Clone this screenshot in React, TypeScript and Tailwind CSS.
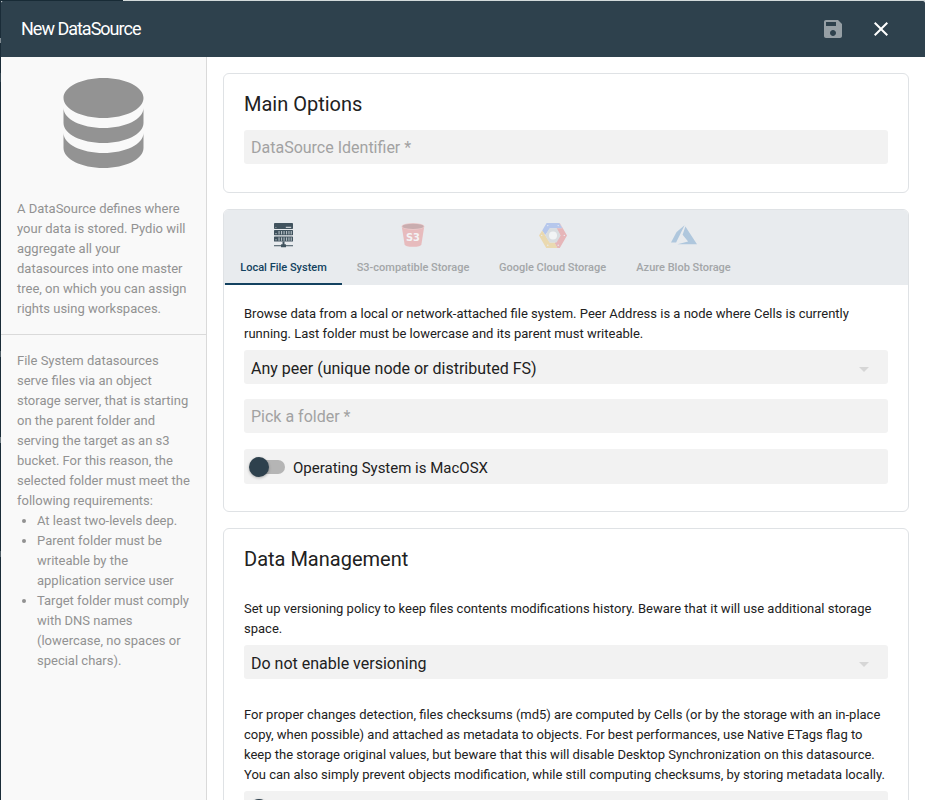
import type { ReactNode } from "react";

function DatabaseIcon() {
  return (
    <svg width="120" height="120" viewBox="-0.1 0 24 24" fill="#939393">
      <path d="M12,3C7.58,3 4,4.79 4,7C4,9.21 7.58,11 12,11C16.42,11 20,9.21 20,7C20,4.79 16.42,3 12,3M4,9V12C4,14.21 7.58,16 12,16C16.42,16 20,14.21 20,12V9C20,11.21 16.42,13 12,13C7.58,13 4,11.21 4,9M4,14V17C4,19.21 7.58,21 12,21C16.42,21 20,19.21 20,17V14C20,16.21 16.42,18 12,18C7.58,18 4,16.21 4,14Z" />
    </svg>
  );
}

function ServerIcon() {
  return (
    <svg width="19" height="25" viewBox="0 0 19 25" fill="#41535e">
      <rect x="0" y="0" width="19" height="6" rx="0.8" />
      <rect x="0" y="7" width="19" height="5.2" rx="0.6" />
      <rect x="0" y="13.4" width="19" height="5.2" rx="0.6" />
      <rect x="8.5" y="18.5" width="2" height="4" />
      <rect x="0" y="22" width="19" height="1.3" fill="#66757e" />
      <rect x="7" y="21.2" width="5" height="3" rx="0.5" />
      <g fill="#b4bdc3">
        <rect x="11.8" y="3.8" width="5.4" height="1" fill="#e8ebee" />
        <rect x="1.4" y="4" width="1" height="0.8" />
        <rect x="1.4" y="10" width="1.2" height="1.2" />
        <rect x="1.4" y="16.2" width="1.2" height="1.2" />
        {[4.5, 7, 9.5, 12, 14.4, 16.7].map((x) => (
          <g key={x}>
            <rect x={x} y="8" width="1.1" height="3.4" />
            <rect x={x} y="14.4" width="1.1" height="3.4" />
          </g>
        ))}
      </g>
    </svg>
  );
}

function BucketIcon() {
  return (
    <svg width="24" height="25" viewBox="0 0 24 25">
      <path d="M0.8 3.8 L3.6 21.4 Q4.2 23.8 12 23.8 Q19.8 23.8 20.4 21.4 L23.2 3.8 Z" fill="#e7bbbd" />
      <ellipse cx="12" cy="3.4" rx="11.5" ry="3.3" fill="#ebcccd" />
      <ellipse cx="12" cy="3.4" rx="10.7" ry="2.6" fill="#c9adaf" />
      <text
        x="12"
        y="18.2"
        textAnchor="middle"
        textLength="14"
        lengthAdjust="spacingAndGlyphs"
        fontFamily="DejaVu Sans, sans-serif"
        fontWeight="700"
        fontSize="11"
        fill="#f3f3f5"
      >
        S3
      </text>
    </svg>
  );
}

function GoogleCloudIcon() {
  return (
    <svg width="28" height="25" viewBox="0 0 28 25">
      <path d="M7.6 0 H20.4 L23.4 5.3 H11.2 L6.2 12 L3.2 7.6 Z" fill="#b6c7ec" />
      <path d="M20.4 0 H20.8 L28 12.4 L20.8 25 H18.2 L15.6 20.2 L21.4 12.4 L17.4 5.3 H23.4 Z" fill="#e6b6b9" />
      <path d="M3.2 7.6 L0 12.4 L7.2 25 H18.4 L15.6 19.6 H10.7 L6.4 12.4 Z" fill="#ead9b0" />
      <path d="M10.4 5.3 H17.8 L21.6 12.4 L17.6 19.6 H10.4 L6.4 12.4 Z" fill="#d9dde0" />
      <circle cx="14" cy="12.4" r="4" fill="#f2f4f5" />
      <g fill="#e8edf2">
        <circle cx="8.8" cy="2.6" r="0.7" />
        <circle cx="19.2" cy="2.6" r="0.7" />
        <circle cx="2.7" cy="12.4" r="0.7" />
        <circle cx="25.3" cy="12.4" r="0.7" />
        <circle cx="8.8" cy="22.3" r="0.7" />
        <circle cx="19.2" cy="22.3" r="0.7" />
      </g>
    </svg>
  );
}

function AzureIcon() {
  return (
    <svg width="26" height="25" viewBox="0 0 26 25" fill="#afc7dd">
      <path d="M13.6 2.2 L5.6 9 L0 19.4 H5.1 Z" />
      <path d="M14.4 3.6 L11.6 11.7 L17.1 18.6 L6.5 21.2 H26 Z" />
    </svg>
  );
}

const tabs: { label: string; icon: ReactNode; width: string }[] = [
  { label: "Local File System", icon: <ServerIcon />, width: "w-[117px]" },
  { label: "S3-compatible Storage", icon: <BucketIcon />, width: "w-[142px]" },
  { label: "Google Cloud Storage", icon: <GoogleCloudIcon />, width: "w-[137px]" },
  { label: "Azure Blob Storage", icon: <AzureIcon />, width: "w-[125px]" },
];

function Field({ children, placeholder, select }: { children: ReactNode; placeholder?: boolean; select?: boolean }) {
  return (
    <div className="flex h-[34px] items-center justify-between rounded-[3px] bg-[#f2f2f2] pr-[19px] pl-[7px] text-base leading-[34px]">
      <span className={placeholder ? "pt-[2px] text-[#a2a2a2]" : "pt-[3px] text-[#212121]"}>{children}</span>
      {select && (
        <svg width="10" height="5" viewBox="0 0 10 5" className="mt-[5px]" fill="#d6d6d6">
          <path d="M0 0H10L5 5Z" />
        </svg>
      )}
    </div>
  );
}

function Toggle({ children }: { children?: ReactNode }) {
  return (
    <div className="flex h-[35px] items-center gap-2 rounded-[3px] bg-[#f2f2f2] pl-[5px]">
      <div className="flex h-5 w-9 items-center">
        <div className="z-10 h-5 w-5 shrink-0 rounded-full bg-[#2e414d] shadow-[0_1px_3px_rgba(0,0,0,0.3)]" />
        <div className="-ml-[18px] h-[14px] w-[34px] shrink-0 rounded-full bg-[#b5b5b5]" />
      </div>
      {children && <span className="pt-[2px] text-[15px] leading-[34px] text-[#212121]">{children}</span>}
    </div>
  );
}

function Card({ children }: { children: ReactNode }) {
  return <section className="shrink-0 overflow-hidden rounded-md border border-[#dfe2e5] bg-white">{children}</section>;
}

export default function App() {
  return (
    <div className="flex h-[800px] w-[925px] flex-col overflow-hidden bg-white font-['Roboto',sans-serif] text-[#212121]">
      <div className="flex h-px shrink-0 bg-[#d3dadb]">
        <div className="w-[123px] bg-[#182b36]" />
      </div>
      <div className="flex min-h-0 flex-1">
        <div className="flex w-px shrink-0 flex-col bg-[#1a2c38]">
          <div className="mt-[37px] h-[5px] bg-[#7f8a91]" />
          <div className="mt-[30px] h-[9px] bg-[#33444f]" />
          <div className="mt-[269px] h-[6px] bg-[#4c5b64]" />
          <div className="mt-[80px] h-[6px] bg-[#6c7980]" />
          <div className="mt-[108px] h-[6px] bg-[#4c5b64]" />
        </div>
        <div className="flex min-w-0 flex-1 flex-col">
          <header className="flex h-14 shrink-0 items-center justify-between rounded-t-[2px] bg-[#2e414d] pr-5 pl-5 text-white">
            <h1 className="text-[18px] leading-6 tracking-[-1px]">New DataSource</h1>
            <div className="flex">
              <button className="flex h-12 w-12 items-center justify-center">
                <svg width="24" height="24" viewBox="0 0 24 24" fill="#969fa5">
                  <path d="M17 3H5c-1.11 0-2 .9-2 2v14c0 1.1.89 2 2 2h14c1.1 0 2-.9 2-2V7l-4-4zm-5 16c-1.66 0-3-1.34-3-3s1.34-3 3-3 3 1.34 3 3-1.34 3-3 3zm3-10H5V5h10v4z" />
                </svg>
              </button>
              <button className="flex h-12 w-12 items-center justify-center">
                <svg width="24" height="24" viewBox="0 0 24 24" fill="#ffffff">
                  <path d="M19 6.41L17.59 5 12 10.59 6.41 5 5 6.41 10.59 12 5 17.59 6.41 19 12 13.41 17.59 19 19 17.59 13.41 12z" />
                </svg>
              </button>
            </div>
          </header>
          <div className="flex min-h-0 flex-1">
            <aside className="w-[206px] shrink-0 border-r border-[#dadada] bg-[#f9f9f9] text-[13px] leading-5 text-[#929292]">
              <div className="flex h-[142px] justify-center pt-[6px] pr-px">
                <DatabaseIcon />
              </div>
              <p className="border-b border-[#dadada] px-4 pb-[15px]">
                A DataSource defines where your data is stored. Pydio will aggregate all your datasources into one
                master tree, on which you can assign rights using workspaces.
              </p>
              <div className="px-4 pt-4">
                File System datasources serve files via an object storage server, that is starting on the parent folder
                and serving the target as an s3 bucket. For this reason, the selected folder must meet the following
                requirements:
                <ul className="list-disc pl-5">
                  <li>At least two-levels deep.</li>
                  <li>Parent folder must be writeable by the application service user</li>
                  <li>Target folder must comply with DNS names (lowercase, no spaces or special chars).</li>
                </ul>
              </div>
            </aside>
            <main className="flex min-w-0 flex-1 flex-col gap-4 overflow-hidden p-4">
              <Card>
                <div className="px-5 pt-[18px] pb-7">
                  <h2 className="mb-[14px] text-xl leading-6">Main Options</h2>
                  <Field placeholder>DataSource Identifier *</Field>
                </div>
              </Card>
              <Card>
                <div className="flex h-[75px] bg-[#e8ebee] pl-px">
                  {tabs.map((tab, i) => (
                    <button
                      key={tab.label}
                      className={`flex shrink-0 flex-col items-center border-b-2 pt-[13px] text-[11px] leading-4 font-medium whitespace-nowrap ${tab.width} ${
                        i === 0 ? "border-[#134260] text-[#134260]" : "border-transparent text-[#a3a6a8]"
                      }`}
                    >
                      <span className="flex h-[25px] items-center">{tab.icon}</span>
                      <span className="mt-3">{tab.label}</span>
                    </button>
                  ))}
                </div>
                <div className="px-5 pt-[19px] pb-[27px]">
                  <p className="mb-[6px] text-[13px] leading-5">
                    Browse data from a local or network-attached file system. Peer Address is a node where Cells is
                    currently running. Last folder must be lowercase and its parent must writeable.
                  </p>
                  <Field select>Any peer (unique node or distributed FS)</Field>
                  <div className="mt-[15px] mb-4">
                    <Field placeholder>Pick a folder *</Field>
                  </div>
                  <Toggle>Operating System is MacOSX</Toggle>
                </div>
              </Card>
              <Card>
                <div className="px-5 pt-[18px] text-[13px] leading-5">
                  <h2 className="mb-7 text-xl leading-6">Data Management</h2>
                  <p className="mb-[6px]">
                    Set up versioning policy to keep files contents modifications history. Beware that it will use
                    additional storage space.
                  </p>
                  <Field select>Do not enable versioning</Field>
                  <p className="mt-[26px] mb-[6px]">
                    For proper changes detection, files checksums (md5) are computed by Cells (or by the storage with an
                    in-place copy, when possible) and attached as metadata to objects. For best performances, use Native
                    ETags flag to keep the storage original values, but beware that this will disable Desktop
                    Synchronization on this datasource. You can also simply prevent objects modification, while still
                    computing checksums, by storing metadata locally.
                  </p>
                  <Toggle />
                </div>
              </Card>
            </main>
          </div>
        </div>
      </div>
    </div>
  );
}
